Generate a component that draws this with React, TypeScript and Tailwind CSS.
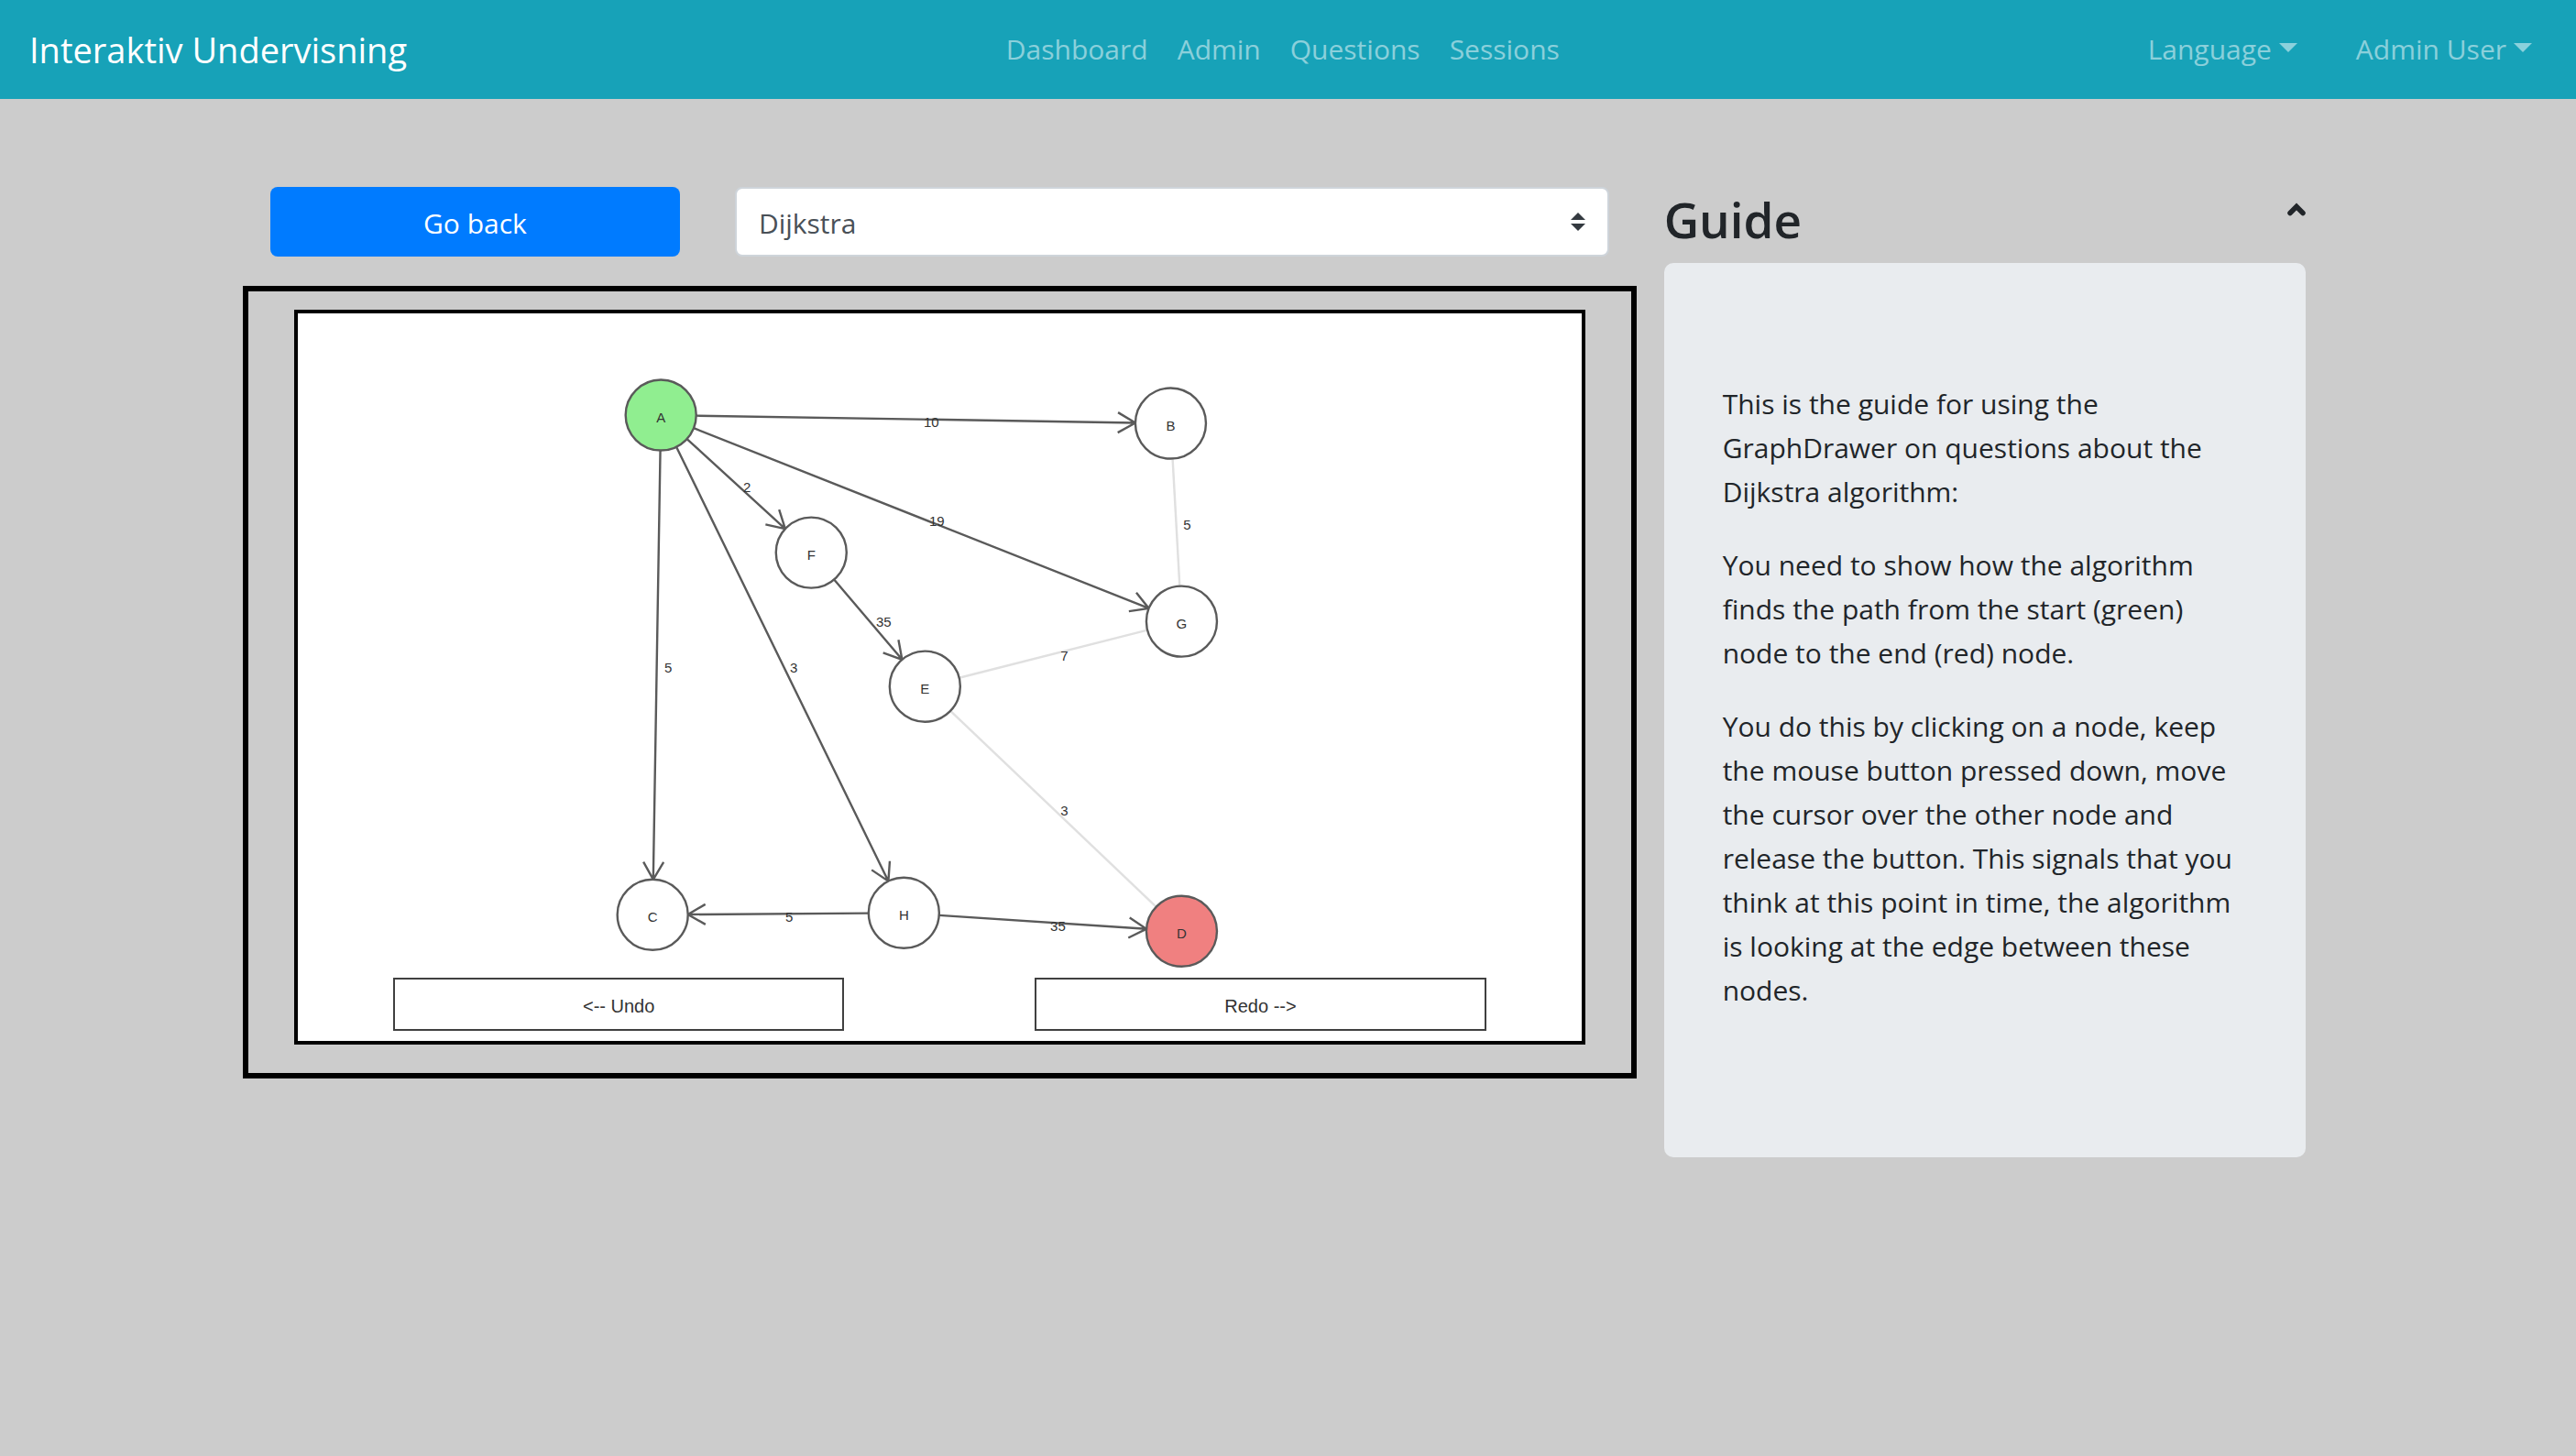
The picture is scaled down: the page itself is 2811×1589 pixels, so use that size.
import { useState } from "react";

type Node = { id: string; x: number; y: number; fill: string };
type Edge = { from: string; to: string; weight: string; lx: number; ly: number; visited: boolean };

const RADIUS = 38.5;
const HEAD = 22;

const nodes: Node[] = [
  { id: "A", x: 396, y: 111, fill: "#90ee90" },
  { id: "B", x: 952, y: 120, fill: "#ffffff" },
  { id: "F", x: 560, y: 261, fill: "#ffffff" },
  { id: "G", x: 964, y: 336, fill: "#ffffff" },
  { id: "E", x: 684, y: 407, fill: "#ffffff" },
  { id: "C", x: 387, y: 656, fill: "#ffffff" },
  { id: "H", x: 661, y: 654, fill: "#ffffff" },
  { id: "D", x: 964, y: 674, fill: "#f08080" },
];

const edges: Edge[] = [
  { from: "B", to: "G", weight: "5", lx: 970, ly: 236, visited: false },
  { from: "E", to: "G", weight: "7", lx: 836, ly: 379, visited: false },
  { from: "E", to: "D", weight: "3", lx: 836, ly: 548, visited: false },
  { from: "A", to: "B", weight: "10", lx: 691, ly: 124, visited: true },
  { from: "A", to: "F", weight: "2", lx: 490, ly: 195, visited: true },
  { from: "A", to: "G", weight: "19", lx: 697, ly: 232, visited: true },
  { from: "A", to: "H", weight: "3", lx: 541, ly: 392, visited: true },
  { from: "A", to: "C", weight: "5", lx: 404, ly: 392, visited: true },
  { from: "F", to: "E", weight: "35", lx: 639, ly: 342, visited: true },
  { from: "H", to: "C", weight: "5", lx: 536, ly: 664, visited: true },
  { from: "H", to: "D", weight: "35", lx: 829, ly: 674, visited: true },
];

const find = (id: string) => nodes.find((n) => n.id === id)!;

/* Line between the rims of two nodes, with an open arrow head on visited edges. */
function edgePath(edge: Edge) {
  const a = find(edge.from);
  const b = find(edge.to);
  const angle = Math.atan2(b.y - a.y, b.x - a.x);
  const x1 = a.x + RADIUS * Math.cos(angle);
  const y1 = a.y + RADIUS * Math.sin(angle);
  const x2 = b.x - RADIUS * Math.cos(angle);
  const y2 = b.y - RADIUS * Math.sin(angle);
  const line = `M${x1} ${y1}L${x2} ${y2}`;
  if (!edge.visited) return line;
  const wing = (turn: number) =>
    `${x2 - HEAD * Math.cos(angle + turn)} ${y2 - HEAD * Math.sin(angle + turn)}`;
  return `${line}M${wing(Math.PI / 6)}L${x2} ${y2}L${wing(-Math.PI / 6)}`;
}

function Graph() {
  return (
    <svg viewBox="0 0 1400 725" className="block w-full" role="img" aria-label="Dijkstra graph">
      {edges.map((e) => (
        <path
          key={e.from + e.to}
          d={edgePath(e)}
          fill="none"
          stroke={e.visited ? "#5a5a5a" : "#e0e0e0"}
          strokeWidth="2.4"
        />
      ))}
      {nodes.map((n) => (
        <circle key={n.id} cx={n.x} cy={n.y} r={RADIUS} fill={n.fill} stroke="#5a5a5a" strokeWidth="2.4" />
      ))}
      <g fontFamily="'Liberation Sans', Arial, sans-serif" fontSize="15" textAnchor="middle" fill="#333333">
        {nodes.map((n) => (
          <text key={n.id} x={n.x} y={n.y + 8}>
            {n.id}
          </text>
        ))}
        {edges.map((e) => (
          <text key={e.from + e.to} x={e.lx} y={e.ly}>
            {e.weight}
          </text>
        ))}
      </g>
    </svg>
  );
}

function Caret() {
  return (
    <svg viewBox="0 0 20 10" className="mb-1 h-[10px] w-5" fill="currentColor" aria-hidden="true">
      <path d="M0 0h20L10 10z" />
    </svg>
  );
}

function Navbar() {
  return (
    <nav className="flex h-[108px] items-center justify-between bg-[#17a2b8] px-8 text-[30px] leading-[48px] text-white/50">
      <a href="#" className="mr-3 text-[38px] leading-[60px] text-white">
        Interaktiv Undervisning
      </a>
      <ul className="flex gap-8">
        {["Dashboard", "Admin", "Questions", "Sessions"].map((label) => (
          <li key={label}>
            <a href="#">{label}</a>
          </li>
        ))}
      </ul>
      <div className="flex gap-16 pr-4">
        {["Language", "Admin User"].map((label) => (
          <button key={label} type="button" className="flex items-center gap-2">
            {label}
            <Caret />
          </button>
        ))}
      </div>
    </nav>
  );
}

function Toolbar() {
  return (
    <div className="grid grid-cols-3">
      <div className="px-[30px]">
        <button type="button" className="h-[76px] w-full rounded-lg bg-[#007bff] pt-0.5 text-[30px] text-white">
          Go back
        </button>
      </div>
      <div className="col-span-2 px-[30px]">
        <div className="relative">
          <select
            aria-label="Algorithm"
            className="block h-[76px] w-full appearance-none rounded-lg border-2 border-[#ced4da] bg-white pt-0.5 pr-14 pl-6 text-[30px] text-[#495057]"
          >
            <option>Dijkstra</option>
          </select>
          <svg
            viewBox="0 0 4 5"
            className="pointer-events-none absolute top-7 right-[26px] h-5 w-4"
            fill="#343a40"
            aria-hidden="true"
          >
            <path d="M2 0L0 2h4zm0 5L0 3h4z" />
          </svg>
        </div>
      </div>
    </div>
  );
}

function DrawingBoard() {
  const button = "h-[58px] border-2 border-[#404040] bg-white pt-1 text-[20px] text-[#333333]";
  return (
    <div className="mt-8 border-[6px] border-black px-[50px] pt-5 pb-[31px]">
      <div className="border-4 border-black bg-white">
        <Graph />
        <div className="grid grid-cols-2 gap-52 px-[104px] pb-[11px] font-['Liberation_Sans',Arial,sans-serif]">
          <button type="button" className={button}>
            {"<-- Undo"}
          </button>
          <button type="button" className={button}>
            {"Redo -->"}
          </button>
        </div>
      </div>
    </div>
  );
}

function Guide() {
  const [open, setOpen] = useState(true);
  return (
    <aside className="px-[30px]">
      <div className="mb-3 flex items-start justify-between">
        <h3 className="text-[53px] leading-[71px] font-semibold">Guide</h3>
        <button type="button" aria-label="Toggle guide" aria-expanded={open} onClick={() => setOpen(!open)} className="mt-4">
          <svg viewBox="0 0 20 16" className="h-4 w-5" fill="none" stroke="currentColor" aria-hidden="true">
            <path d="M3 12.5L10 5.5L17 12.5" strokeWidth="5.5" strokeLinecap="round" />
          </svg>
        </button>
      </div>
      {open && (
        <div className="space-y-8 rounded-[10px] bg-[#e9ecef] px-16 pt-[130px] pb-[158px] text-[30px] leading-[48px]">
          <p>This is the guide for using the GraphDrawer on questions about the Dijkstra algorithm:</p>
          <p>You need to show how the algorithm finds the path from the start (green) node to the end (red) node.</p>
          <p>
            You do this by clicking on a node, keep the mouse button pressed down, move the cursor over the other node
            and release the button. This signals that you think at this point in time, the algorithm is looking at the
            edge between these nodes.
          </p>
        </div>
      )}
    </aside>
  );
}

export default function App() {
  return (
    <div className="min-h-screen bg-[#cccccc] font-['Segoe_UI','Open_Sans',sans-serif] text-[#212529]">
      <Navbar />
      <main className="mx-auto grid max-w-[2281px] grid-cols-3 items-start pt-24">
        <div className="col-span-2">
          <Toolbar />
          <DrawingBoard />
        </div>
        <Guide />
      </main>
    </div>
  );
}
